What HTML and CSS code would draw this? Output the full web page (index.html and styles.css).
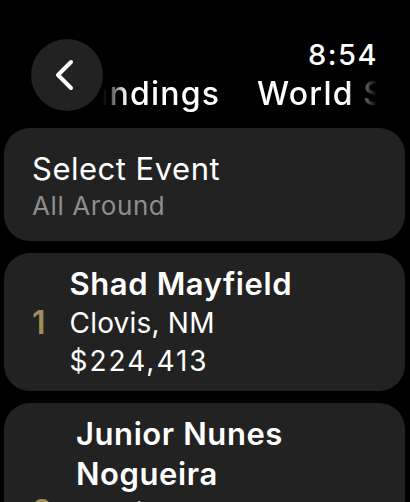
FILE: index.html
```html
<!DOCTYPE html>
<html lang="en">

<head>
  <meta charset="UTF-8">
  <meta name="viewport" content="width=device-width, initial-scale=1.0">
  <title>Standings</title>

  <link rel="stylesheet" href="styles.css">
</head>

<body>
  <section id="watch">
    <header class="nav">
      <button class="back-btn" aria-label="Back">
        <svg width="24" height="36" viewBox="0 0 24 36">
          <path d="M16 5 L3 18 L16 31" fill="none" stroke="#fff" stroke-width="4" stroke-linecap="round" stroke-linejoin="round" />
        </svg>
      </button>
      <p class="clock">8:54</p>
      <div class="titles">
        <div class="titles-track">
          <span class="title">Standings</span>
          <span class="title">World Series</span>
        </div>
      </div>
    </header>

    <div class="list">
      <div class="card event-card">
        <p class="event-label">Select Event</p>
        <p class="event-value">All Around</p>
      </div>

      <div class="card rider">
        <p class="rank">1</p>
        <div class="rider-info">
          <p class="rider-name">Shad Mayfield</p>
          <p class="rider-line">Clovis, NM</p>
          <p class="rider-line rider-prize">$224,413</p>
        </div>
      </div>

      <div class="card rider">
        <p class="rank">2</p>
        <div class="rider-info">
          <p class="rider-name">Junior Nunes Nogueira</p>
          <p class="rider-line">Presidente Prudente, BR</p>
          <p class="rider-line rider-prize">$198,760</p>
        </div>
      </div>
    </div>
  </section>
</body>

</html>
```

FILE: styles.css
```css
* {
  margin: 0;
  padding: 0;
  box-sizing: border-box;
}

html,
body {
  background-color: #000;
}

body {
  font-family: Inter, "Noto Sans", sans-serif;
  color: #fff;
  overflow: hidden;
}

#watch {
  width: 410px;
  height: 502px;
  overflow: hidden;
}

.nav {
  display: grid;
  grid-template-columns: 72px 1fr;
  grid-template-rows: 38px 38px;
  row-gap: 1px;
  padding: 36px 33px 0 31px;
}

.back-btn {
  grid-row: 1 / 3;
  grid-column: 1;
  align-self: center;
  width: 72px;
  height: 72px;
  border: none;
  border-radius: 50%;
  background-color: #222;
  display: flex;
  align-items: center;
  justify-content: center;
  cursor: pointer;
}

.clock {
  grid-row: 1;
  grid-column: 2;
  text-align: right;
  font-size: 29px;
  line-height: 38px;
  font-weight: 500;
  letter-spacing: 1.5px;
  margin-right: -1px;
}

.titles {
  grid-row: 2;
  grid-column: 2;
  overflow: hidden;
  -webkit-mask-image: linear-gradient(to right, transparent 0, #000 24px, #000 calc(100% - 30px), transparent 100%);
  mask-image: linear-gradient(to right, transparent 0, #000 24px, #000 calc(100% - 30px), transparent 100%);
}

.titles-track {
  display: flex;
  gap: 37px;
  white-space: nowrap;
  transform: translateX(-47px);
}

.title {
  font-size: 32px;
  line-height: 38px;
  font-weight: 500;
  letter-spacing: 1.2px;
}

.list {
  display: flex;
  flex-direction: column;
  gap: 12px;
  padding: 15px 5px 0 4px;
}

.card {
  background-color: #222;
  border-radius: 26px;
}

.event-card {
  padding: 21px 28px 18px;
}

.event-label {
  font-size: 31px;
  line-height: 40px;
  letter-spacing: 0.5px;
}

.event-value {
  font-size: 26px;
  line-height: 34px;
  letter-spacing: 0.6px;
  color: #8d8d92;
}

.rider {
  display: flex;
  align-items: center;
  gap: 24px;
  padding: 11px 28px;
}

.rank {
  font-size: 32px;
  font-weight: 600;
  color: #a38b57;
}

.rider-name {
  font-size: 31px;
  line-height: 40px;
  font-weight: 600;
  letter-spacing: 0.6px;
}

.rider-line {
  font-size: 28px;
  line-height: 38px;
  letter-spacing: 0.2px;
}

.rider-prize {
  letter-spacing: 2px;
}
```
